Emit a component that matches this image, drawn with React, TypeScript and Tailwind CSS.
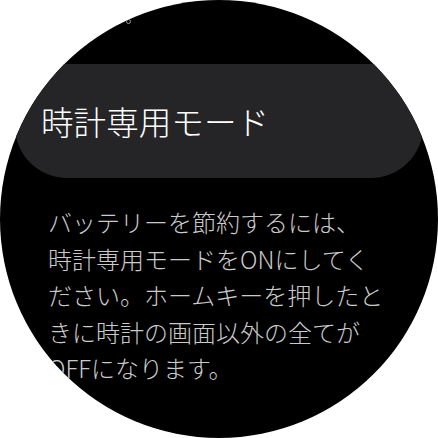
import React from "react";

export default function App() {
  const lines = [
    "バッテリーを節約するには、",
    "時計専用モードをONにしてく",
    "ださい。ホームキーを押したと",
    "きに時計の画面以外の全てが",
    "OFFになります。",
  ];
  return (
    <div className="w-[438px] h-[438px] bg-white">
      <div
        className="w-[438px] h-[438px] rounded-full bg-black overflow-hidden flex flex-col"
        style={{ fontFamily: '"Noto Sans CJK JP", "Noto Sans", sans-serif' }}
      >
        <div className="h-[64px] pl-[126px] pt-[19px]">
          <div className="w-[5px] h-[5px] rounded-full border border-[#9a9a9a]" />
        </div>
        <div className="mx-[15px] h-[114px] rounded-[52px] bg-[#252527] flex items-center pl-[26px]">
          <span className="text-[32.6px] leading-none font-light text-white whitespace-nowrap">
            時計専用モード
          </span>
        </div>
        <div className="pl-[48px] mt-[26px] text-[24px] leading-[36.6px] font-light text-[#cacaca]">
          {lines.map((l, i) => (
            <div key={i} className="whitespace-nowrap">
              {l}
            </div>
          ))}
        </div>
      </div>
    </div>
  );
}
